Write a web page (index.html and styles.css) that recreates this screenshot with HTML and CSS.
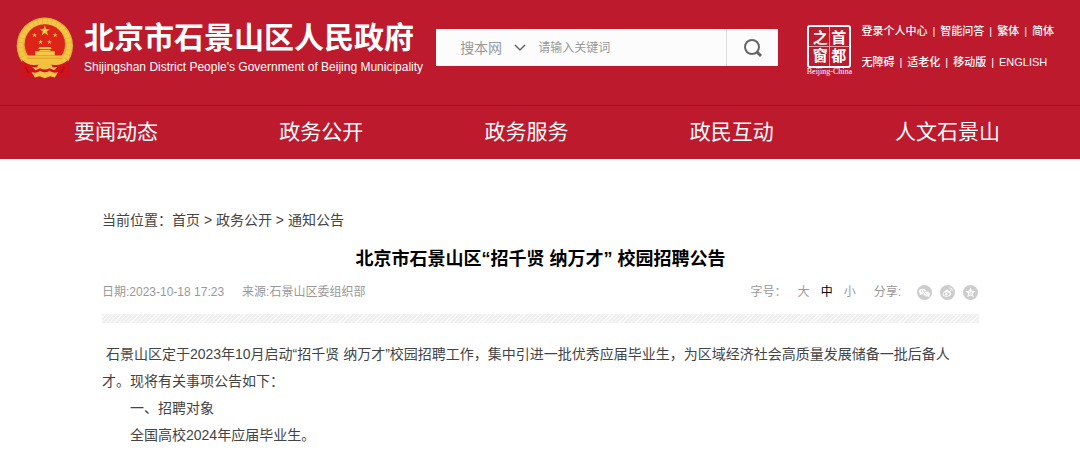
FILE: index.html
```
<!DOCTYPE html>
<html lang="zh-CN">
<head>
    <meta charset="UTF-8">
    <meta name="viewport" content="width=device-width, initial-scale=1.0">
    <title>北京市石景山区“招千贤 纳万才” 校园招聘公告</title>
    <link rel="stylesheet" href="styles.css">
</head>
<body>

<header class="header">
    <div class="header-top">
        <!-- Logo -->
        <a href="#" class="logo">
            <svg class="emblem" viewBox="17 22 175 186" aria-hidden="true">
                <path d="M40 150 L34 202 L62 199 L84 207 L125 207 L147 199 L176 202 L170 150 Z" fill="#d3121b"/>
                <circle cx="104" cy="108" r="85" fill="#e9b132"/>
                <circle cx="104" cy="108" r="73" fill="none" stroke="#f3c649" stroke-width="15" stroke-dasharray="12 2"/>
                <circle cx="104" cy="104" r="61" fill="#dd2418"/>
                <path d="M43 138 H165 Q160 156 148 166 H60 Q48 156 43 138 Z" fill="#f3c340"/>
                <path d="M50 146 H158" stroke="#d88d23" stroke-width="2"/>
                <path d="M84 118 L88 112 H121 L125 118 Z M88 120 H121 V124 H88 Z M75 125 H134 V138 H75 Z" fill="#f6c648"/>
                <g fill="#f8c83f">
                    <path d="M104 47 L108 58 L120 58 L110 65 L114 77 L104 70 L94 77 L98 65 L88 58 L100 58 Z"/>
                    <path id="star" d="M73 69 L75 74 L80 74 L76 77 L78 83 L73 79 L68 83 L70 77 L66 74 L71 74 Z"/>
                    <use href="#star" x="62"/>
                    <use href="#star" x="18" y="21"/>
                    <use href="#star" x="45" y="21"/>
                </g>
                <!-- Ribbon and gear -->
                <path d="M36 152 Q52 168 76 166 L96 164 L104 170 L112 164 L132 166 Q156 168 173 152 L178 200 L160 196 L150 204 L142 190 L66 190 L58 204 L48 196 L31 200 Z" fill="#d3121b"/>
                <path d="M80 174 Q88 155 104 163 Q120 155 128 174 L142 172 L132 182 L118 176 Q104 184 90 176 L76 182 L66 172 Z" fill="#f3bf3e"/>
                <path d="M64 188 Q82 192 90 184 Q104 194 118 184 Q126 192 144 188 L134 204 L120 200 L104 206 L88 200 L74 204 Z" fill="#f5c543"/>
                <path d="M46 172 L54 190 M162 172 L154 190" stroke="#9d0c18" stroke-width="4"/>
            </svg>
            <span class="logo-text">
                <strong>北京市石景山区人民政府</strong>
                <span class="logo-en">Shijingshan District People's Government of Beijing Municipality</span>
            </span>
        </a>

        <!-- Search -->
        <form class="search">
            <select class="search-scope" aria-label="搜索范围">
                <option>搜本网</option>
            </select>
            <svg class="arrow" viewBox="0 0 12 8" aria-hidden="true">
                <path d="M1 1 L6 6 L11 1" fill="none" stroke="#666" stroke-width="1.5"/>
            </svg>
            <input type="text" class="search-input" placeholder="请输入关键词" aria-label="请输入关键词">
            <button type="submit" class="search-btn" aria-label="搜索">
                <svg viewBox="0 0 20 20" aria-hidden="true">
                    <circle cx="9" cy="9" r="7" fill="none" stroke="#666" stroke-width="2"/>
                    <path d="M14 14 L18 18" stroke="#666" stroke-width="3"/>
                </svg>
            </button>
        </form>

        <!-- Capital window seal and tools -->
        <div class="tools">
            <a href="#" class="seal">
                <span class="seal-box">
                    <span>之</span><span>首</span>
                    <span>窗</span><span>都</span>
                </span>
                <span class="seal-name">Beijing-China</span>
            </a>
            <div class="tool-links">
                <div class="tool-row">
                    <a href="#">登录个人中心</a><i>|</i><a href="#">智能问答</a><i>|</i><a href="#">繁体</a><i>|</i><a href="#">简体</a>
                </div>
                <div class="tool-row">
                    <a href="#">无障碍</a><i>|</i><a href="#">适老化</a><i>|</i><a href="#">移动版</a><i>|</i><a href="#">ENGLISH</a>
                </div>
            </div>
        </div>
    </div>

    <nav class="nav">
        <a href="#">要闻动态</a>
        <a href="#">政务公开</a>
        <a href="#">政务服务</a>
        <a href="#">政民互动</a>
        <a href="#">人文石景山</a>
    </nav>
</header>

<main class="article">
    <div class="crumbs">当前位置：<a href="#">首页</a> &gt; <a href="#">政务公开</a> &gt; <a href="#">通知公告</a></div>

    <h1>北京市石景山区“招千贤 纳万才” 校园招聘公告</h1>

    <div class="meta">
        <span>日期:2023-10-18 17:23</span>
        <span>来源:石景山区委组织部</span>
        <div class="font-size">
            <span>字号：</span>
            <button type="button">大</button>
            <button type="button" class="active">中</button>
            <button type="button">小</button>
        </div>
        <div class="share">
            <span>分享:</span>
            <a href="#" aria-label="微信">
                <svg viewBox="0 0 16 16">
                    <circle cx="8" cy="8" r="8" fill="#ccc"/>
                    <ellipse cx="6" cy="7" rx="4" ry="3" fill="#fff"/>
                    <path d="M3 8 L3 11 L6 9 Z" fill="#fff"/>
                    <ellipse cx="10.500" cy="9.500" rx="3.500" ry="2.800" fill="#fff" stroke="#ccc" stroke-width=".6"/>
                    <path d="M11 12 L13 13 L13 10 Z" fill="#fff"/>
                    <g fill="#bbb"><circle cx="4.600" cy="6.300" r=".6"/><circle cx="7.200" cy="6.300" r=".6"/><circle cx="9.400" cy="9" r=".5"/><circle cx="11.700" cy="9" r=".5"/></g>
                </svg>
            </a>
            <a href="#" aria-label="微博">
                <svg viewBox="0 0 16 16">
                    <circle cx="8" cy="8" r="8" fill="#ccc"/>
                    <path d="M7 5 C8.500 4.400 9.300 5 9 6.500 C11 6 11.500 6.700 11 7.700 C13 9 11.500 12.500 7 12.500 C1 12.500 2 8 7 5 Z" fill="#fff"/>
                    <ellipse cx="7" cy="9.700" rx="3.300" ry="2.100" fill="#ccc"/>
                    <circle cx="6.600" cy="9.800" r="1.300" fill="#fff"/>
                    <path d="M10 3 Q13.500 2.800 13.200 6.800 M10.200 4.900 Q11.700 4.900 11.500 6.500" fill="none" stroke="#fff" stroke-width=".9"/>
                </svg>
            </a>
            <a href="#" aria-label="QQ空间">
                <svg viewBox="0 0 16 16">
                    <circle cx="8" cy="8" r="8" fill="#ccc"/>
                    <path d="M8 2.500 L9.500 6 L13.500 6.400 L10.500 9 L11.400 13 L8 10.900 L4.600 13 L5.500 9 L2.500 6.400 L6.500 6 Z" fill="#fff"/>
                    <path d="M6 7.500 H9.500 L6.500 9.700 H10" fill="none" stroke="#ccc" stroke-width=".8"/>
                </svg>
            </a>
        </div>
    </div>

    <div class="stripe"></div>

    <div class="content">
        <p class="lead">&nbsp;石景山区定于2023年10月启动“招千贤 纳万才”校园招聘工作，集中引进一批优秀应届毕业生，为区域经济社会高质量发展储备一批后备人才。现将有关事项公告如下：</p>
        <p>一、招聘对象</p>
        <p>全国高校2024年应届毕业生。</p>
    </div>
</main>

</body>
</html>
```
FILE: styles.css
```
/* General Styles */
* {
    box-sizing: border-box;
}

body {
    margin: 0;
    font-family: "Liberation Sans", "Noto Sans CJK SC", sans-serif;
    font-size: 14px;
    color: #444;
    background-color: #fff;
}

a {
    color: inherit;
    text-decoration: none;
}

svg {
    display: block;
}

/* Header */
.header {
    background-color: #bd1a2d;
    color: #fff;
}

.header-top {
    display: flex;
    align-items: flex-start;
    min-height: 105px;
    padding: 0 26px 0 16px;
}

.logo {
    display: flex;
    gap: 10px;
    padding-top: 17px;
}

.emblem {
    width: 58px;
    height: 62px;
}

.logo-text {
    display: flex;
    flex-direction: column;
    white-space: nowrap;
}

.logo-text strong {
    font-size: 30px;
    font-weight: bold;
    line-height: 42px;
}

.logo-en {
    font-size: 12px;
    line-height: 16px;
}

.search {
    display: flex;
    align-items: center;
    width: 342px;
    height: 37px;
    margin: 29px 0 0 13px;
    padding-left: 24px;
    background-color: #fcfcfc;
}

.search-scope {
    width: 54px;
    padding: 0;
    border: none;
    background: none;
    appearance: none;
    font: inherit;
    color: #999;
}

.arrow {
    width: 12px;
    height: 8px;
}

.search-input {
    flex: 1;
    min-width: 0;
    padding: 0 12px;
    border: none;
    background: none;
    font: inherit;
    font-size: 12px;
}

.search-input::placeholder {
    color: #999;
}

.search-btn {
    display: flex;
    align-items: center;
    justify-content: center;
    width: 52px;
    height: 100%;
    padding: 0;
    border: none;
    border-left: 1px solid #ddd;
    background: none;
    cursor: pointer;
}

.search-btn svg {
    width: 20px;
    height: 20px;
}

.tools {
    display: flex;
    gap: 8px;
    margin-left: auto;
}

.seal {
    display: flex;
    flex-direction: column;
    align-items: center;
    width: 48px;
    margin-top: 25px;
}

.seal-box {
    display: grid;
    grid-template-columns: 1fr 1fr;
    gap: 1px;
    width: 44px;
    padding: 2px;
    border: 2px solid #fff;
    border-radius: 3px;
    background: linear-gradient(#e8a3aa, #e8a3aa) center / 1px 100% no-repeat,
                linear-gradient(#e8a3aa, #e8a3aa) center / 100% 1px no-repeat;
    font-size: 15px;
    font-weight: bold;
    line-height: 17px;
    text-align: center;
}

.seal-name {
    font-family: "Liberation Serif", serif;
    font-size: 8px;
    line-height: 8px;
    white-space: nowrap;
}

.tool-links {
    padding-top: 16px;
    font-size: 11px;
    font-weight: 500;
    line-height: 31px;
    white-space: nowrap;
}

.tool-row {
    display: flex;
    gap: 5px;
}

.tool-row i {
    font-style: normal;
}

/* Navigation */
.nav {
    display: flex;
    justify-content: space-between;
    padding: 0 80px 1px 74px;
    border-top: 1px solid #a01220;
    font-size: 21px;
    line-height: 52px;
}

/* Article */
.article {
    padding: 51px 101px 0 102px;
}

.crumbs {
    line-height: 20px;
}

h1 {
    margin: 15px 0 9px;
    font-size: 18px;
    line-height: 28px;
    text-align: center;
    color: #000;
}

.meta {
    display: flex;
    align-items: center;
    gap: 18px;
    padding-right: 1px;
    font-size: 12px;
    line-height: 20px;
    color: #999;
}

.font-size {
    display: flex;
    gap: 11px;
    margin-left: auto;
}

.font-size button {
    padding: 0;
    border: none;
    background: none;
    font: inherit;
    line-height: 20px;
    color: #999;
    cursor: pointer;
}

.font-size .active {
    color: #000;
}

.share {
    display: flex;
    align-items: center;
    gap: 8px;
}

.share span {
    margin-right: 8px;
}

.share svg {
    width: 15px;
    height: 15px;
}

.stripe {
    height: 9px;
    margin: 12px 0 18px;
    background: repeating-linear-gradient(135deg, #f0f0f0 0, #f0f0f0 2px, #fafafa 2px, #fafafa 3px);
}

.content {
    padding-right: 14px;
    line-height: 27px;
}

.content p {
    margin: 0;
    text-indent: 2em;
}

.content .lead {
    text-indent: 0;
}
```
